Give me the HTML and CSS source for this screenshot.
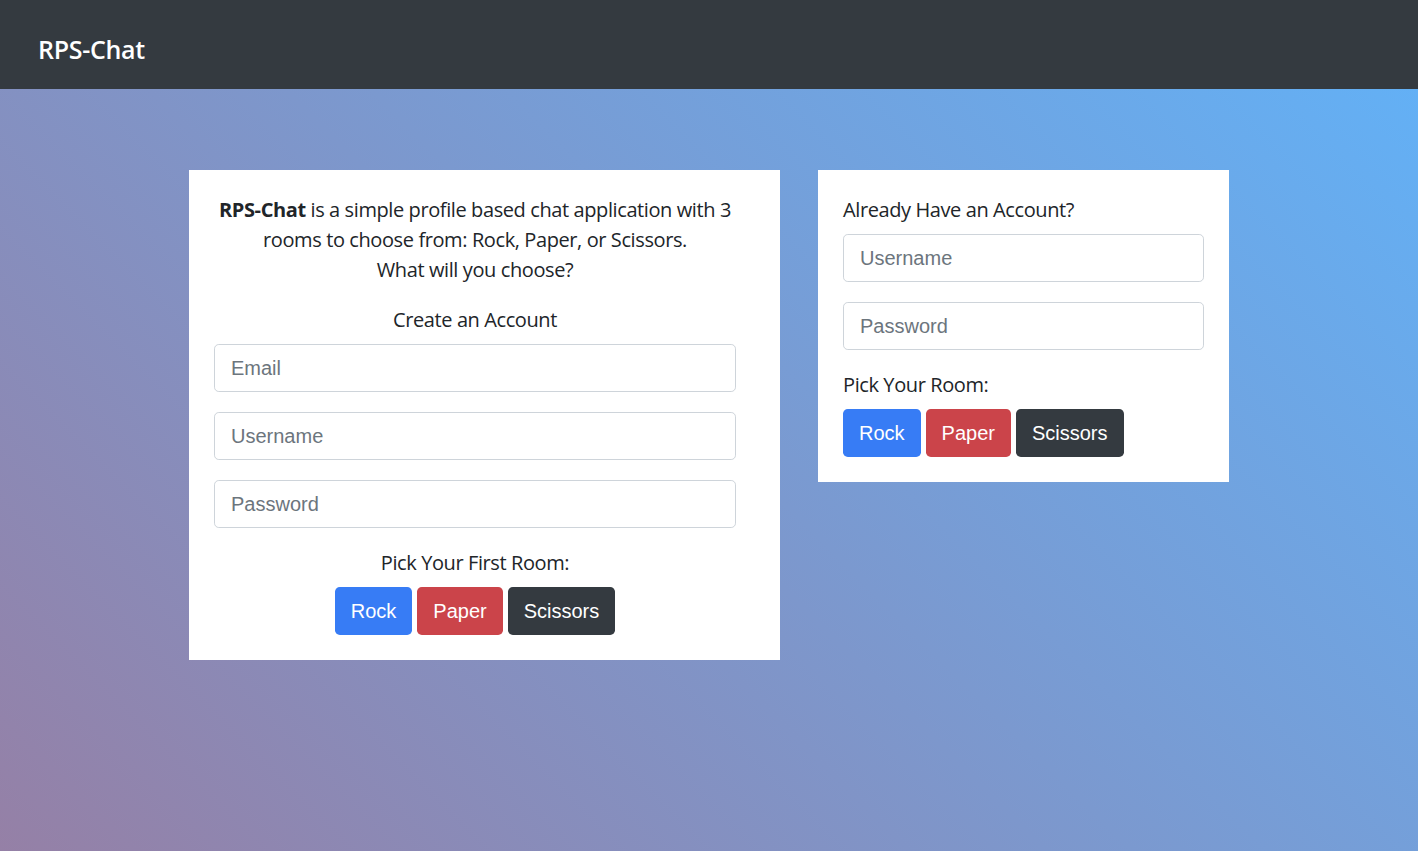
FILE: index.html
```html
<!DOCTYPE html>
<html lang="en">
<head>
<meta charset="utf-8">
<title>RPS-Chat</title>
<link rel="stylesheet" href="styles.css">
</head>
<body>
  <nav class="navbar">
    <span class="brand">RPS-Chat</span>
  </nav>
  <main class="stage">
    <div class="cards">
      <section class="card card-signup">
        <div class="inner">
          <p class="intro"><strong>RPS-Chat</strong> is a simple profile based chat application with 3<br>rooms to choose from: Rock, Paper, or Scissors.<br>What will you choose?</p>
          <div class="label center">Create an Account</div>
          <input class="field" type="email" placeholder="Email">
          <input class="field" type="text" placeholder="Username">
          <input class="field" type="password" placeholder="Password">
          <div class="label center">Pick Your First Room:</div>
          <div class="btns center">
            <button class="btn btn-rock">Rock</button>
            <button class="btn btn-paper">Paper</button>
            <button class="btn btn-scissors">Scissors</button>
          </div>
        </div>
      </section>
      <section class="card card-login">
        <div class="label">Already Have an Account?</div>
        <input class="field" type="text" placeholder="Username">
        <input class="field" type="password" placeholder="Password">
        <div class="label">Pick Your Room:</div>
        <div class="btns">
          <button class="btn btn-rock">Rock</button>
          <button class="btn btn-paper">Paper</button>
          <button class="btn btn-scissors">Scissors</button>
        </div>
      </section>
    </div>
  </main>
</body>
</html>
```

FILE: styles.css
```css
* { box-sizing: border-box; }
html, body { margin: 0; height: 100%; }
body {
  font-family: "Open Sans", "Noto Sans", sans-serif;
  font-size: 20px;
  letter-spacing: -0.4px;
  color: #212529;
  display: flex;
  flex-direction: column;
  min-height: 851px;
}
.navbar {
  height: 89px;
  background: #343a40;
  display: flex;
  align-items: center;
  padding: 0 38px;
  flex: none;
}
.brand {
  color: #fff;
  font-weight: 600;
  font-size: 25px;
  letter-spacing: -0.3px;
  line-height: 1;
  padding-top: 10px;
}
.stage {
  flex: 1;
  background: linear-gradient(45deg, #9580a6 0%, #63b0f5 100%);
  padding-top: 81px;
}
.cards {
  display: flex;
  justify-content: center;
  align-items: flex-start;
  gap: 38px;
}
.card {
  background: #fff;
  padding: 25px;
}
.card-signup { width: 591px; padding-right: 44px; }
.card-login { width: 411px; }
.intro {
  margin: 0 0 20px;
  text-align: center;
  line-height: 30px;
}
.intro strong { font-weight: 700; }
.label {
  line-height: 30px;
  margin-bottom: 9px;
}
.center { text-align: center; }
.field {
  display: block;
  width: 100%;
  height: 48px;
  margin: 0 0 20px;
  padding: 8px 16px;
  border: 1px solid #ced4da;
  border-radius: 4.8px;
  font-family: "Liberation Sans", Arial, sans-serif;
  font-size: 20px;
  letter-spacing: 0;
  color: #495057;
  background: #fff;
  outline: none;
}
.field::placeholder { color: #6c757d; opacity: 1; }
.btns {
  display: flex;
  gap: 5px;
}
.btns.center { justify-content: center; }
.btn {
  height: 48px;
  padding: 8px 16px;
  border: 0;
  border-radius: 4.8px;
  font-family: "Liberation Sans", Arial, sans-serif;
  font-size: 20px;
  letter-spacing: 0;
  line-height: 30px;
  color: #fff;
  cursor: pointer;
}
.btn-rock { background: #377cf5; }
.btn-paper { background: #cb444a; }
.btn-scissors { background: #343a40; }
```
